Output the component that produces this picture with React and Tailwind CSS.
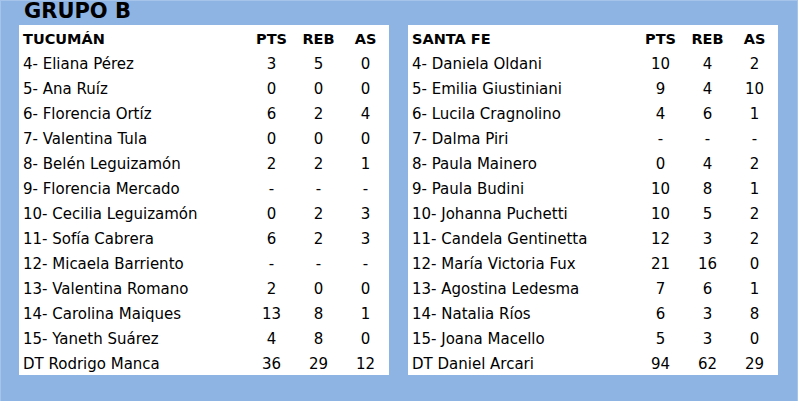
const tucuman = [
  ['4- Eliana Pérez', '3', '5', '0'],
  ['5- Ana Ruíz', '0', '0', '0'],
  ['6- Florencia Ortíz', '6', '2', '4'],
  ['7- Valentina Tula', '0', '0', '0'],
  ['8- Belén Leguizamón', '2', '2', '1'],
  ['9- Florencia Mercado', '-', '-', '-'],
  ['10- Cecilia Leguizamón', '0', '2', '3'],
  ['11- Sofía Cabrera', '6', '2', '3'],
  ['12- Micaela Barriento', '-', '-', '-'],
  ['13- Valentina Romano', '2', '0', '0'],
  ['14- Carolina Maiques', '13', '8', '1'],
  ['15- Yaneth Suárez', '4', '8', '0'],
  ['DT Rodrigo Manca', '36', '29', '12'],
];

const santaFe = [
  ['4- Daniela Oldani', '10', '4', '2'],
  ['5- Emilia Giustiniani', '9', '4', '10'],
  ['6- Lucila Cragnolino', '4', '6', '1'],
  ['7- Dalma Piri', '-', '-', '-'],
  ['8- Paula Mainero', '0', '4', '2'],
  ['9- Paula Budini', '10', '8', '1'],
  ['10- Johanna Puchetti', '10', '5', '2'],
  ['11- Candela Gentinetta', '12', '3', '2'],
  ['12- María Victoria Fux', '21', '16', '0'],
  ['13- Agostina Ledesma', '7', '6', '1'],
  ['14- Natalia Ríos', '6', '3', '8'],
  ['15- Joana Macello', '5', '3', '0'],
  ['DT Daniel Arcari', '94', '62', '29'],
];

function Team({ name, rows }) {
  return (
    <div className="w-[370px] bg-white">
      <div className="grid h-[25px] grid-cols-[1fr_47px_47px_47px] items-center pt-[3px] text-[14.5px] font-bold">
        <div className="pl-1">{name}</div>
        <div className="text-center">PTS</div>
        <div className="text-center">REB</div>
        <div className="text-center">AS</div>
      </div>
      {rows.map((r) => (
        <div key={r[0]} className="grid h-[25px] grid-cols-[1fr_47px_47px_47px] items-center pt-[4px]">
          <div className="pl-1 whitespace-nowrap">{r[0]}</div>
          <div className="text-center">{r[1]}</div>
          <div className="text-center">{r[2]}</div>
          <div className="text-center">{r[3]}</div>
        </div>
      ))}
    </div>
  );
}

export default function App() {
  return (
    <div
      className="h-[401px] w-[798px] border-l border-r border-t border-[#a6c3e9] bg-[#8db4e2] text-[15px] leading-none text-black"
      style={{ fontFamily: 'Verdana, "DejaVu Sans", sans-serif' }}
    >
      <div className="flex h-[24px] items-end pl-[23px] pb-[3px] text-[21px] font-bold">GRUPO B</div>
      <div className="flex gap-[19px] pl-[18px]">
        <Team name="TUCUMÁN" rows={tucuman} />
        <Team name="SANTA FE" rows={santaFe} />
      </div>
    </div>
  );
}
